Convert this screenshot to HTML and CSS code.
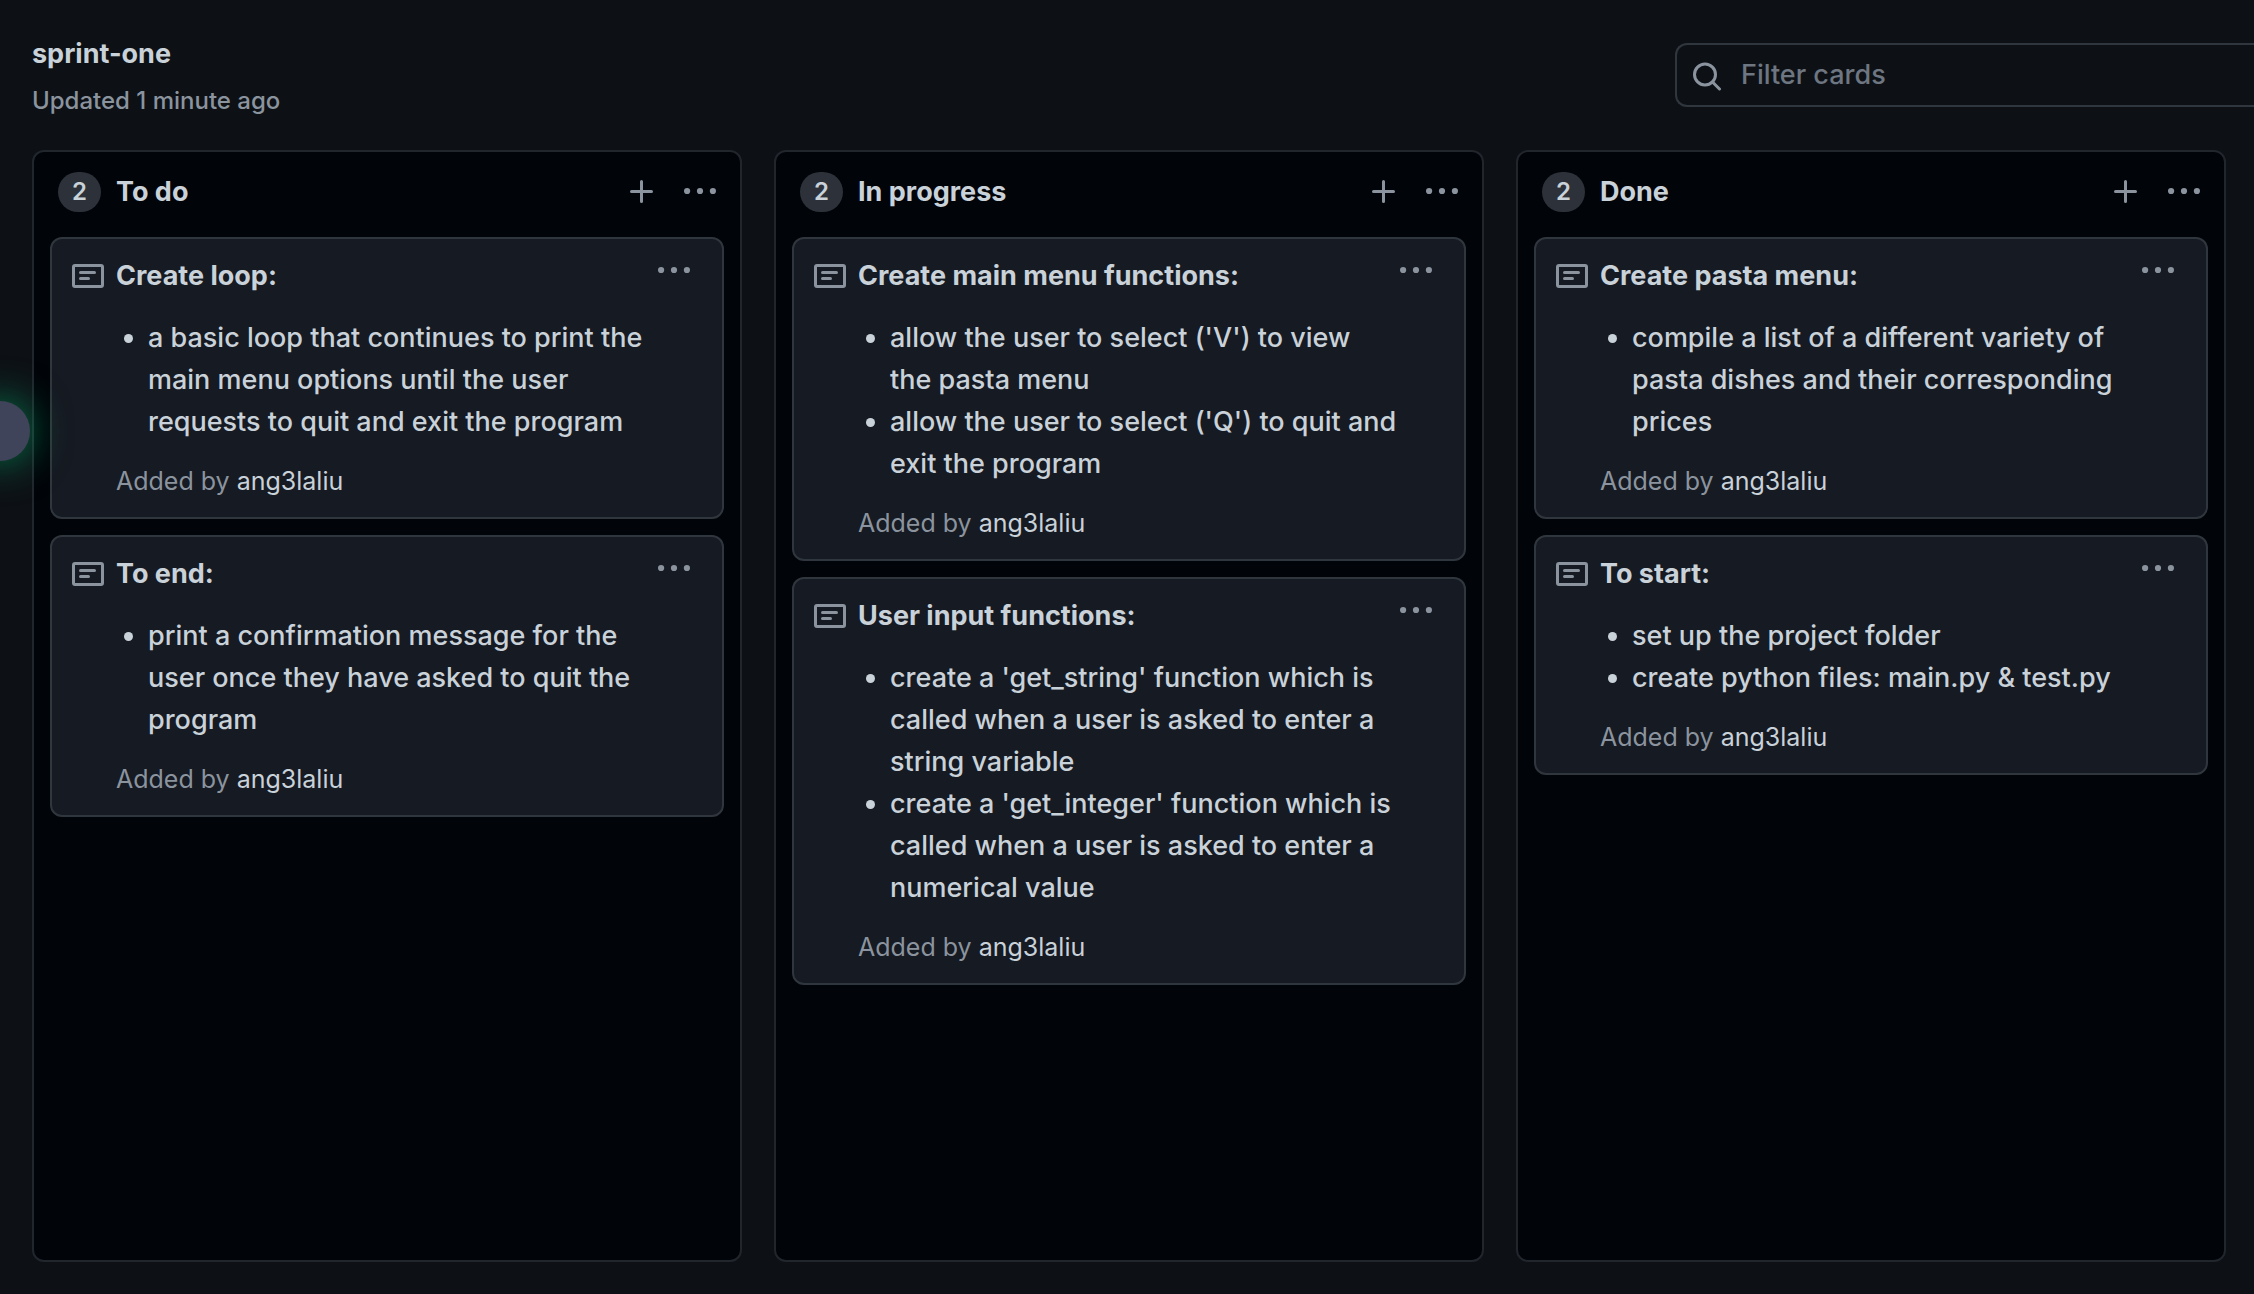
FILE: index.html
```html
<!DOCTYPE html>
<html lang="en">
<head>
<meta charset="utf-8">
<meta name="viewport" content="width=device-width, initial-scale=1">
<title>sprint-one</title>
<link rel="stylesheet" href="styles.css">
</head>
<body>
<svg class="sprite" aria-hidden="true">
  <symbol id="i-plus" viewBox="0 0 32 32"><path d="M15.500 5.500v20M5.500 15.500h20" fill="none" stroke="currentColor" stroke-width="3" stroke-linecap="round"/></symbol>
  <symbol id="i-dots" viewBox="0 0 32 32"><circle cx="3.100" cy="15" r="3.100"/><circle cx="16" cy="15" r="3.100"/><circle cx="28.900" cy="15" r="3.100"/></symbol>
  <symbol id="i-note" viewBox="0 0 32 24"><rect x="1.500" y="1.500" width="29" height="21" rx="1.500" fill="none" stroke="currentColor" stroke-width="3"/><path d="M8.500 8.500h14M8.500 14.500h8" fill="none" stroke="currentColor" stroke-width="3" stroke-linecap="round"/></symbol>
  <symbol id="i-search" viewBox="0 0 32 32"><circle cx="14" cy="15.500" r="10.500" fill="none" stroke="currentColor" stroke-width="3"/><path d="M21.500 23l7 7" fill="none" stroke="currentColor" stroke-width="3" stroke-linecap="round"/></symbol>
</svg>

<header class="topbar">
  <div class="project">
    <h1 class="project-name">sprint-one</h1>
    <p class="project-updated">Updated 1 minute ago</p>
  </div>
  <label class="filter">
    <svg class="icon-search" aria-hidden="true"><use href="#i-search"/></svg>
    <input class="filter-input" type="text" placeholder="Filter cards" aria-label="Filter cards">
  </label>
</header>

<main class="board">
  <section class="column">
    <header class="column-head">
      <span class="count">2</span>
      <h2 class="column-title">To do</h2>
      <button class="icon-button" aria-label="Add a note to To do"><svg aria-hidden="true"><use href="#i-plus"/></svg></button>
      <button class="icon-button" aria-label="To do column menu"><svg aria-hidden="true"><use href="#i-dots"/></svg></button>
    </header>
    <article class="card">
      <svg class="icon-note" aria-hidden="true"><use href="#i-note"/></svg>
      <div class="card-body">
        <h3 class="card-title">Create loop:</h3>
        <ul class="card-list">
          <li>a basic loop that continues to print the main menu options until the user requests to quit and exit the program</li>
        </ul>
        <p class="card-author">Added by <a href="#ang3laliu">ang3laliu</a></p>
      </div>
      <button class="icon-button card-menu" aria-label="Card menu"><svg aria-hidden="true"><use href="#i-dots"/></svg></button>
    </article>
    <article class="card">
      <svg class="icon-note" aria-hidden="true"><use href="#i-note"/></svg>
      <div class="card-body">
        <h3 class="card-title">To end:</h3>
        <ul class="card-list">
          <li>print a confirmation message for the user once they have asked to quit the program</li>
        </ul>
        <p class="card-author">Added by <a href="#ang3laliu">ang3laliu</a></p>
      </div>
      <button class="icon-button card-menu" aria-label="Card menu"><svg aria-hidden="true"><use href="#i-dots"/></svg></button>
    </article>
  </section>

  <section class="column">
    <header class="column-head">
      <span class="count">2</span>
      <h2 class="column-title">In progress</h2>
      <button class="icon-button" aria-label="Add a note to In progress"><svg aria-hidden="true"><use href="#i-plus"/></svg></button>
      <button class="icon-button" aria-label="In progress column menu"><svg aria-hidden="true"><use href="#i-dots"/></svg></button>
    </header>
    <article class="card">
      <svg class="icon-note" aria-hidden="true"><use href="#i-note"/></svg>
      <div class="card-body">
        <h3 class="card-title">Create main menu functions:</h3>
        <ul class="card-list">
          <li>allow the user to select ('V') to view the&nbsp;pasta menu</li>
          <li>allow the user to select ('Q') to quit and exit the program</li>
        </ul>
        <p class="card-author">Added by <a href="#ang3laliu">ang3laliu</a></p>
      </div>
      <button class="icon-button card-menu" aria-label="Card menu"><svg aria-hidden="true"><use href="#i-dots"/></svg></button>
    </article>
    <article class="card">
      <svg class="icon-note" aria-hidden="true"><use href="#i-note"/></svg>
      <div class="card-body">
        <h3 class="card-title">User input functions:</h3>
        <ul class="card-list">
          <li>create a 'get_string' function which is called when a user is asked to enter a string variable</li>
          <li>create a 'get_integer' function which is called when a user is asked to enter a numerical value</li>
        </ul>
        <p class="card-author">Added by <a href="#ang3laliu">ang3laliu</a></p>
      </div>
      <button class="icon-button card-menu" aria-label="Card menu"><svg aria-hidden="true"><use href="#i-dots"/></svg></button>
    </article>
  </section>

  <section class="column">
    <header class="column-head">
      <span class="count">2</span>
      <h2 class="column-title">Done</h2>
      <button class="icon-button" aria-label="Add a note to Done"><svg aria-hidden="true"><use href="#i-plus"/></svg></button>
      <button class="icon-button" aria-label="Done column menu"><svg aria-hidden="true"><use href="#i-dots"/></svg></button>
    </header>
    <article class="card">
      <svg class="icon-note" aria-hidden="true"><use href="#i-note"/></svg>
      <div class="card-body">
        <h3 class="card-title">Create pasta menu:</h3>
        <ul class="card-list">
          <li>compile a list of a different variety of pasta dishes and their corresponding prices</li>
        </ul>
        <p class="card-author">Added by <a href="#ang3laliu">ang3laliu</a></p>
      </div>
      <button class="icon-button card-menu" aria-label="Card menu"><svg aria-hidden="true"><use href="#i-dots"/></svg></button>
    </article>
    <article class="card">
      <svg class="icon-note" aria-hidden="true"><use href="#i-note"/></svg>
      <div class="card-body">
        <h3 class="card-title">To start:</h3>
        <ul class="card-list">
          <li>set up the project folder</li>
          <li>create python files: main.py &amp; test.py</li>
        </ul>
        <p class="card-author">Added by <a href="#ang3laliu">ang3laliu</a></p>
      </div>
      <button class="icon-button card-menu" aria-label="Card menu"><svg aria-hidden="true"><use href="#i-dots"/></svg></button>
    </article>
  </section>
</main>
<div class="edge-handle" aria-hidden="true"></div>
</body>
</html>
```
FILE: styles.css
```css
* {
  box-sizing: border-box;
}

body {
  margin: 0;
  min-height: 100vh;
  display: flex;
  flex-direction: column;
  background: #0d1116;
  color: #c9d1d9;
  font: 450 27px/42px Inter, "Liberation Sans", sans-serif;
}

h1, h2, h3, p, ul {
  margin: 0;
}

svg {
  display: block;
  fill: currentColor;
}

.sprite {
  position: absolute;
  width: 0;
  height: 0;
}

/* Top bar */
.topbar {
  display: flex;
  justify-content: space-between;
  align-items: flex-start;
  padding: 33px 0 31px 32px;
}

.project-name {
  font-size: 27px;
  font-weight: 700;
}

.project-updated {
  margin-top: 8px;
  color: #8b949e;
  font-size: 24px;
  line-height: 36px;
}

.filter {
  display: flex;
  align-items: center;
  gap: 18px;
  flex: 0 1 579px;
  height: 64px;
  margin-top: 10px;
  padding-left: 14px;
  border: 2px solid #30363d;
  border-right: 0;
  border-radius: 12px 0 0 12px;
  color: #8b949e;
}

.icon-search {
  flex: none;
  width: 32px;
  height: 32px;
}

.filter-input {
  flex: 1;
  min-width: 0;
  padding: 0;
  border: 0;
  outline: 0;
  background: none;
  color: #c9d1d9;
  font: inherit;
}

.filter-input::placeholder {
  color: #6e7681;
  opacity: 1;
}

/* Board */
.board {
  flex: 1;
  display: grid;
  grid-template-columns: repeat(3, 1fr);
  gap: 32px;
  padding: 0 28px 32px 32px;
}

.column {
  display: flex;
  flex-direction: column;
  gap: 16px;
  padding: 16px;
  border: 2px solid #21262d;
  border-radius: 12px;
  background: #010409;
}

.column-head {
  display: flex;
  align-items: center;
  gap: 26px;
  padding: 3px 8px 8px;
}

.count {
  min-width: 43px;
  border-radius: 20px;
  background: #2d3139;
  font-size: 24px;
  font-weight: 600;
  line-height: 40px;
  text-align: center;
}

.column-title {
  flex: 1;
  margin-left: -11px;
  font-size: 27px;
  font-weight: 700;
}

.icon-button {
  flex: none;
  padding: 0;
  border: 0;
  background: none;
  color: #8b949e;
  cursor: pointer;
}

.icon-button svg {
  width: 32px;
  height: 32px;
}

/* Cards */
.card {
  display: flex;
  align-items: flex-start;
  padding: 16px 32px 18px 20px;
  border: 2px solid #30363d;
  border-radius: 12px;
  background: #161a22;
}

.card-menu {
  margin-left: -4px;
}

.icon-note {
  flex: none;
  width: 32px;
  height: 24px;
  margin: 9px 12px 0 0;
  color: #8b949e;
}

.card-body {
  flex: 1;
  min-width: 0;
}

.card-title {
  font-size: 27px;
  font-weight: 700;
}

.card-list {
  margin: 20px 0;
  padding-left: 32px;
}

.card-author {
  color: #8b949e;
  font-size: 25px;
  font-weight: 400;
  line-height: 36px;
}

.card-author a {
  color: #c9d1d9;
  text-decoration: none;
}

/* Round handle half hidden behind the left window edge */
.edge-handle {
  position: fixed;
  top: 401px;
  left: -30px;
  width: 60px;
  height: 60px;
  border-radius: 50%;
  background: #40445a;
  box-shadow: 0 0 40px rgba(0, 200, 120, 0.6);
}
```
